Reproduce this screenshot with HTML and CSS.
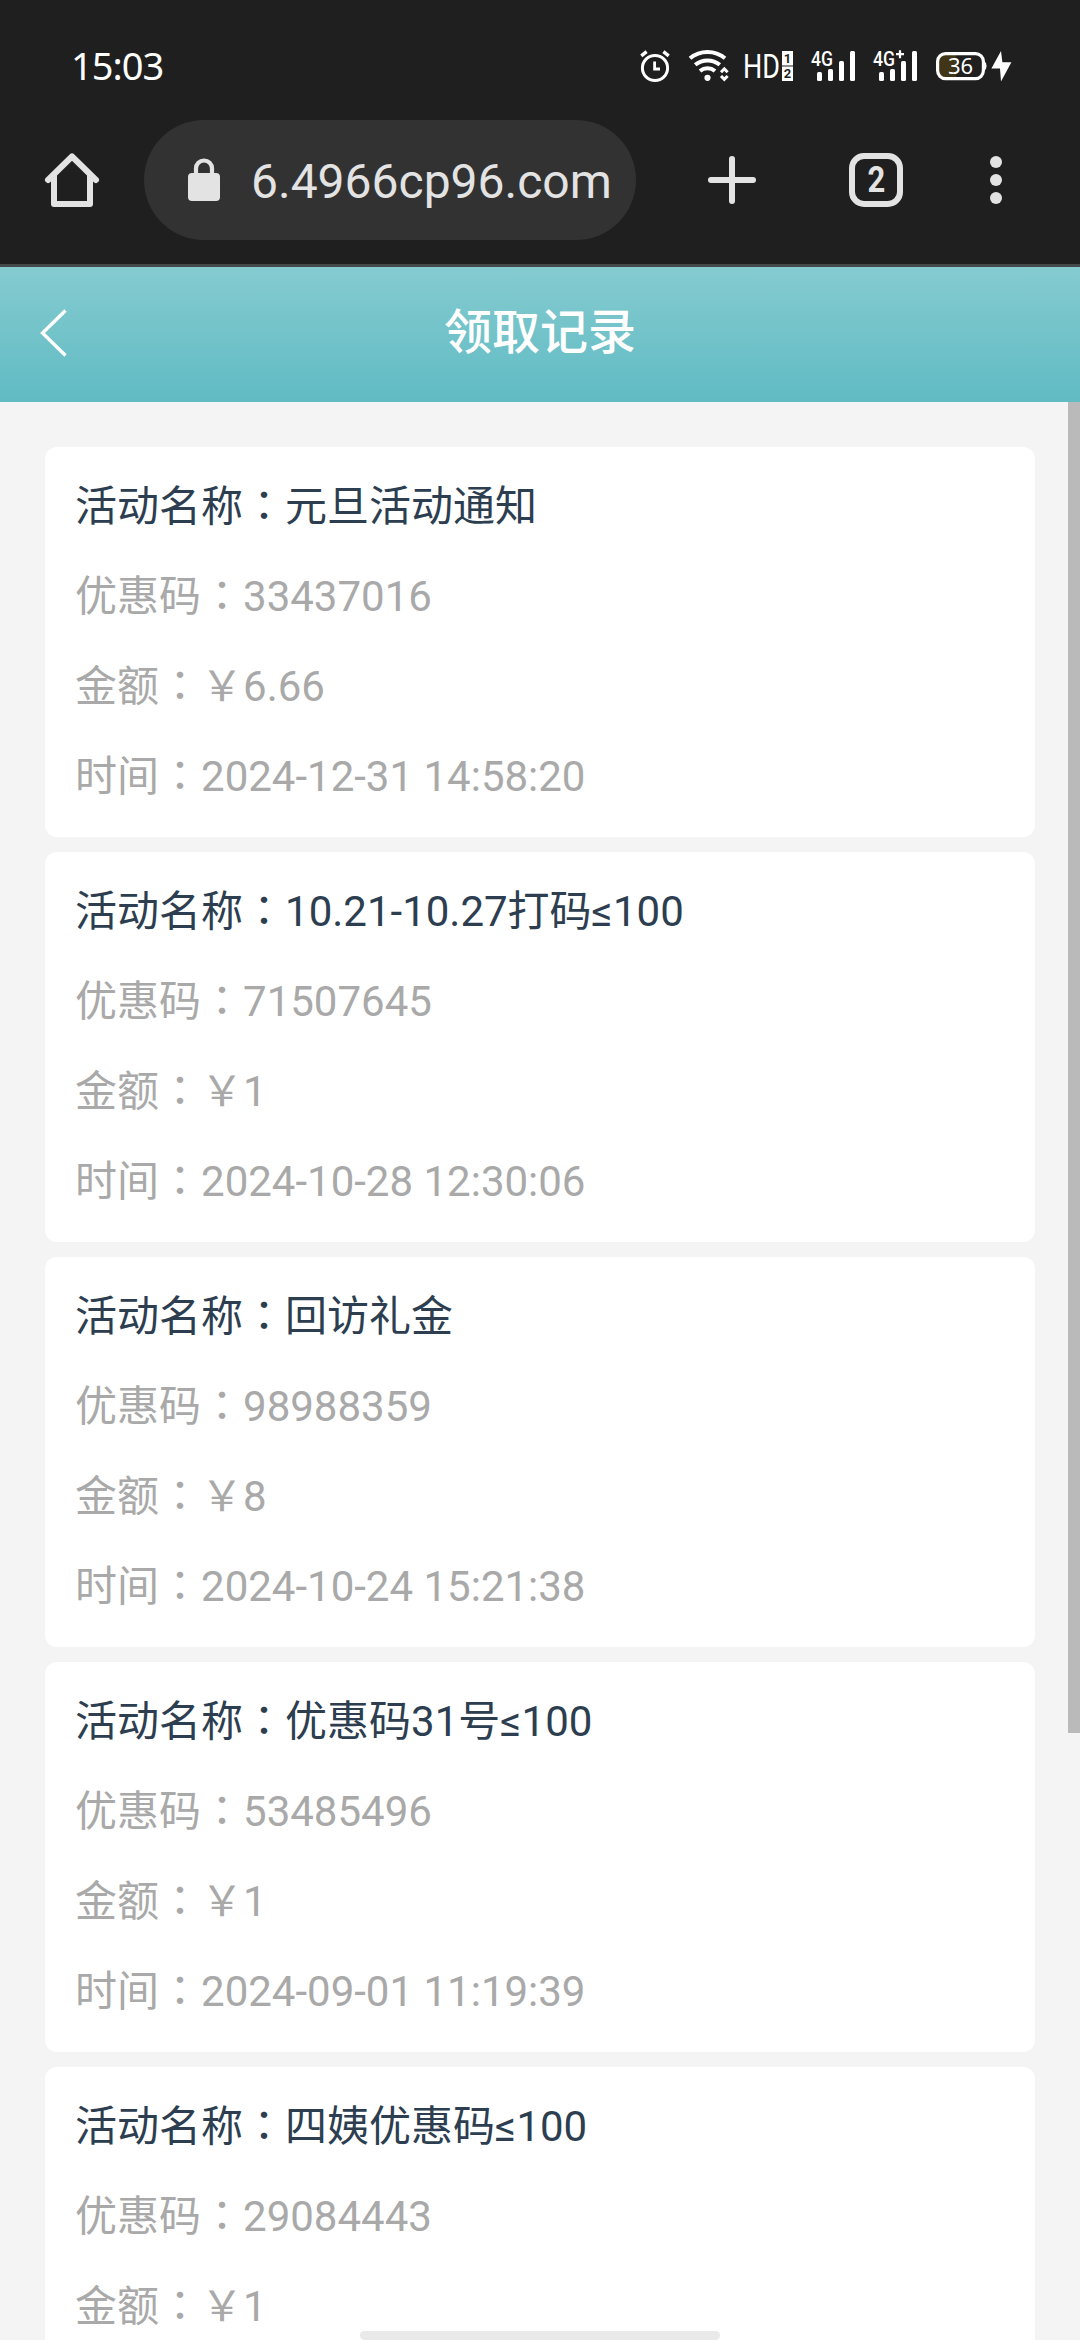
FILE: index.html
```html
<!DOCTYPE html>
<html lang="zh-CN">
<head>
    <meta charset="UTF-8">
    <meta name="viewport" content="width=device-width, initial-scale=1.0">
    <title>领取记录</title>
    <link rel="stylesheet" href="styles.css">
</head>
<body>
    <div class="screen">
        <div class="statusbar">
            <div class="clock">15:03</div>
            <div class="statusIcons">
                <!-- alarm -->
                <svg class="alarm" width="30" height="32" viewBox="0 0 30 32" fill="none" stroke="#fff">
                    <circle cx="15" cy="18" r="12.6" stroke-width="3"/>
                    <path d="M14.6 11.5V19H20" stroke-width="2.8"/>
                    <path d="M1.3 5.8L6.6 1.6M23.4 1.6L28.7 5.8" stroke-width="3.4"/>
                </svg>
                <!-- wifi -->
                <svg class="wifi" width="40" height="32" viewBox="0 0 40 32" fill="none" stroke="#fff" stroke-width="4">
                    <path d="M1 8.3A27.5 27.5 0 0 1 36 8.3"/>
                    <path d="M6.2 14.8A19.5 19.5 0 0 1 30.8 14.8"/>
                    <path d="M11 21A11.8 11.8 0 0 1 26 21"/>
                    <circle cx="18.5" cy="27.8" r="3.1" fill="#fff" stroke="none"/>
                    <path d="M32 22.2L35.3 18.8L38.6 22.2M32 26L35.3 29.4L38.6 26" stroke-width="3"/>
                </svg>
                <!-- hd voice -->
                <svg class="hd" width="50" height="32" viewBox="0 0 50 32">
                    <text class="hdText" x="-1" y="28" textLength="37" lengthAdjust="spacingAndGlyphs">HD</text>
                    <rect x="38" y="1" width="11" height="14.5" fill="#fff"/>
                    <rect x="38" y="16.5" width="11" height="14.5" fill="#fff"/>
                    <text class="simText" x="43.5" y="12.8" text-anchor="middle">1</text>
                    <text class="simText" x="43.5" y="28.4" text-anchor="middle">2</text>
                </svg>
                <!-- signal 1 -->
                <svg class="signal" width="46" height="32" viewBox="0 0 46 32">
                    <text class="netText" x="0" y="15.6" textLength="22" lengthAdjust="spacingAndGlyphs">4G</text>
                    <g fill="#fff">
                        <rect x="6" y="22" width="5" height="9" rx="1.5"/>
                        <rect x="17" y="19" width="5" height="12" rx="1.5"/>
                        <rect x="28" y="11" width="5" height="20" rx="1.5"/>
                        <rect x="39" y="1" width="5" height="30" rx="1.5"/>
                    </g>
                </svg>
                <!-- signal 2 -->
                <svg class="signal signalPlus" width="46" height="32" viewBox="0 0 46 32">
                    <text class="netText" x="0" y="15.6" textLength="22" lengthAdjust="spacingAndGlyphs">4G</text>
                    <path d="M23 4.2H31M27 0.2V8.2" stroke="#fff" stroke-width="2.2"/>
                    <g fill="#fff">
                        <rect x="6" y="22" width="5" height="9" rx="1.5"/>
                        <rect x="17" y="19" width="5" height="12" rx="1.5"/>
                        <rect x="28" y="11" width="5" height="20" rx="1.5"/>
                        <rect x="39" y="1" width="5" height="30" rx="1.5"/>
                    </g>
                </svg>
                <!-- battery -->
                <svg class="battery" width="76" height="32" viewBox="0 0 76 32">
                    <path d="M9 4H20V28H9Q3 28 3 22V10Q3 4 9 4Z" fill="#403516"/>
                    <rect x="1.6" y="3.6" width="45.8" height="25" rx="8" fill="none" stroke="#fff" stroke-width="3.2"/>
                    <path d="M48 11Q50.6 12.5 50.6 16T48 21Z" fill="#fff"/>
                    <text class="batteryText" x="24.5" y="23.6" text-anchor="middle">36</text>
                    <path d="M65 1L55.4 18.6H64L65 31.4L75.4 12.2H66.4Z" fill="#fff"/>
                </svg>
            </div>
        </div>

        <div class="toolbar">
            <svg class="home" width="54" height="54" viewBox="0 0 54 54" fill="none" stroke="#e3e3e3" stroke-width="6" stroke-linecap="round" stroke-linejoin="round">
                <path d="M3 27L27 3.5L51 27"/>
                <path d="M9 23V51H45V23"/>
            </svg>
            <div class="address">
                <svg class="lock" width="32" height="44" viewBox="0 0 32 44">
                    <path d="M8 16V10.5A8 8 0 0 1 24 10.5V16" fill="none" stroke="#e3e3e3" stroke-width="4.2"/>
                    <rect x="0" y="15" width="32" height="28" rx="4" fill="#e3e3e3"/>
                </svg>
                <span class="url">6.4966cp96.com</span>
            </div>
            <svg class="plus" width="48" height="48" viewBox="0 0 48 48" stroke="#e3e3e3" stroke-width="6" stroke-linecap="round">
                <path d="M3 24H45M24 3V45"/>
            </svg>
            <div class="tabs"><span>2</span></div>
            <svg class="more" width="12" height="48" viewBox="0 0 12 48" fill="#e3e3e3">
                <circle cx="6" cy="6" r="6"/>
                <circle cx="6" cy="24" r="6"/>
                <circle cx="6" cy="42" r="6"/>
            </svg>
        </div>

        <div class="header">
            <svg class="back" width="27" height="48" viewBox="0 0 27 48" fill="none" stroke="#fff" stroke-width="3.4">
                <path d="M25.5 1.5L2.5 24L25.5 46.5"/>
            </svg>
            <div class="title">领取记录</div>
        </div>

        <div class="list">
            <div class="card">
                <div class="row name">活动名称<i lang="zh-TW">：</i>元旦活动通知</div>
                <div class="row">优惠码<i lang="zh-TW">：</i>33437016</div>
                <div class="row">金额<i lang="zh-TW">：￥</i>6.66</div>
                <div class="row">时间<i lang="zh-TW">：</i>2024-12-31 14:58:20</div>
            </div>
            <div class="card">
                <div class="row name">活动名称<i lang="zh-TW">：</i>10.21-10.27打码≤100</div>
                <div class="row">优惠码<i lang="zh-TW">：</i>71507645</div>
                <div class="row">金额<i lang="zh-TW">：￥</i>1</div>
                <div class="row">时间<i lang="zh-TW">：</i>2024-10-28 12:30:06</div>
            </div>
            <div class="card">
                <div class="row name">活动名称<i lang="zh-TW">：</i>回访礼金</div>
                <div class="row">优惠码<i lang="zh-TW">：</i>98988359</div>
                <div class="row">金额<i lang="zh-TW">：￥</i>8</div>
                <div class="row">时间<i lang="zh-TW">：</i>2024-10-24 15:21:38</div>
            </div>
            <div class="card">
                <div class="row name">活动名称<i lang="zh-TW">：</i>优惠码31号≤100</div>
                <div class="row">优惠码<i lang="zh-TW">：</i>53485496</div>
                <div class="row">金额<i lang="zh-TW">：￥</i>1</div>
                <div class="row">时间<i lang="zh-TW">：</i>2024-09-01 11:19:39</div>
            </div>
            <div class="card">
                <div class="row name">活动名称<i lang="zh-TW">：</i>四姨优惠码≤100</div>
                <div class="row">优惠码<i lang="zh-TW">：</i>29084443</div>
                <div class="row">金额<i lang="zh-TW">：￥</i>1</div>
            </div>
            <div class="scrollbar"></div>
        </div>
        <div class="gesture"></div>
    </div>
</body>
</html>
```
FILE: styles.css
```css
body {
    margin: 0;
    background-color: #f4f4f4;
    font-family: Roboto, 'Noto Sans CJK SC', sans-serif;
}
svg {
    display: block;
    flex: none;
    overflow: visible;
}
.screen {
    position: relative;
    display: flex;
    flex-direction: column;
    width: 1080px;
    height: 2340px;
    overflow: hidden;
}

/* status bar */
.statusbar {
    display: flex;
    justify-content: space-between;
    height: 120px;
    flex: none;
    box-sizing: border-box;
    padding: 50px 68px 0 71px;
    background-color: #1f1f1f;
    color: #fff;
}
.clock {
    font-family: 'Noto Sans', sans-serif;
    font-size: 38px;
    line-height: 30px;
    letter-spacing: -1px;
}
.statusIcons {
    display: flex;
}
.wifi {
    margin-left: 19px;
}
.hd {
    margin-left: 15px;
}
.signal {
    margin-left: 17px;
}
.signalPlus {
    margin-left: 16px;
}
.battery {
    margin-left: 17px;
}
.hdText {
    font-family: Roboto, sans-serif;
    font-size: 34px;
    fill: #fff;
}
.simText {
    font-family: Roboto, sans-serif;
    font-size: 13px;
    font-weight: 700;
    fill: #1f1f1f;
}
.netText {
    font-family: Roboto, sans-serif;
    font-size: 20px;
    font-weight: 500;
    fill: #fff;
}
.batteryText {
    font-family: 'Noto Sans', sans-serif;
    font-size: 22px;
    fill: #fff;
}

/* browser toolbar */
.toolbar {
    display: flex;
    align-items: center;
    height: 147px;
    flex: none;
    box-sizing: border-box;
    padding: 0 45px 24px;
    border-bottom: 3px solid #45494c;
    background-color: #1f1f1f;
    color: #e3e3e3;
}
.address {
    display: flex;
    align-items: center;
    width: 492px;
    height: 120px;
    margin-left: 45px;
    box-sizing: border-box;
    padding-left: 44px;
    border-radius: 60px;
    background-color: #323232;
}
.url {
    margin-left: 31px;
    padding-top: 3px;
    font-size: 48px;
    line-height: 60px;
}
.plus {
    margin-left: 72px;
}
.tabs {
    width: 54px;
    height: 54px;
    margin-left: 93px;
    box-sizing: border-box;
    border: 6px solid #e3e3e3;
    border-radius: 15px;
    font-size: 36px;
    font-weight: 700;
    line-height: 43px;
    text-align: center;
}
.tabs span {
    display: inline-block;
    transform: scaleX(0.86);
}
.more {
    margin-left: 87px;
}

/* page header */
.header {
    display: grid;
    grid-template-columns: 100px 1fr 100px;
    align-items: center;
    height: 135px;
    flex: none;
    box-sizing: border-box;
    padding-bottom: 3px;
    background: linear-gradient(#84cbd0, #61bbc3);
    color: #fff;
}
.back {
    margin-left: 40px;
}
.title {
    font-size: 48px;
    font-weight: 500;
    line-height: 72px;
    text-align: center;
}

/* records */
.list {
    position: relative;
    display: flex;
    flex-direction: column;
    gap: 15px;
    flex: 1;
    min-height: 0;
    padding: 45px;
}
.card {
    height: 390px;
    flex: none;
    box-sizing: border-box;
    padding: 11px 30px 19px;
    border-radius: 12px;
    background-color: #fff;
}
.row {
    height: 90px;
    font-size: 42px;
    line-height: 90px;
    color: #a9a9a9;
    white-space: nowrap;
}
.name {
    color: #2c3e50;
}
/* full width punctuation, centred in its cell */
.row i {
    font-family: 'Noto Sans CJK TC', sans-serif;
    font-style: normal;
}
.scrollbar {
    position: absolute;
    top: 0;
    right: 0;
    width: 12px;
    height: 1331px;
    background-color: #bababa;
}
.gesture {
    position: absolute;
    left: 360px;
    bottom: 0;
    width: 360px;
    height: 9px;
    border-radius: 5px;
    background-color: #e9e9e9;
}
```
